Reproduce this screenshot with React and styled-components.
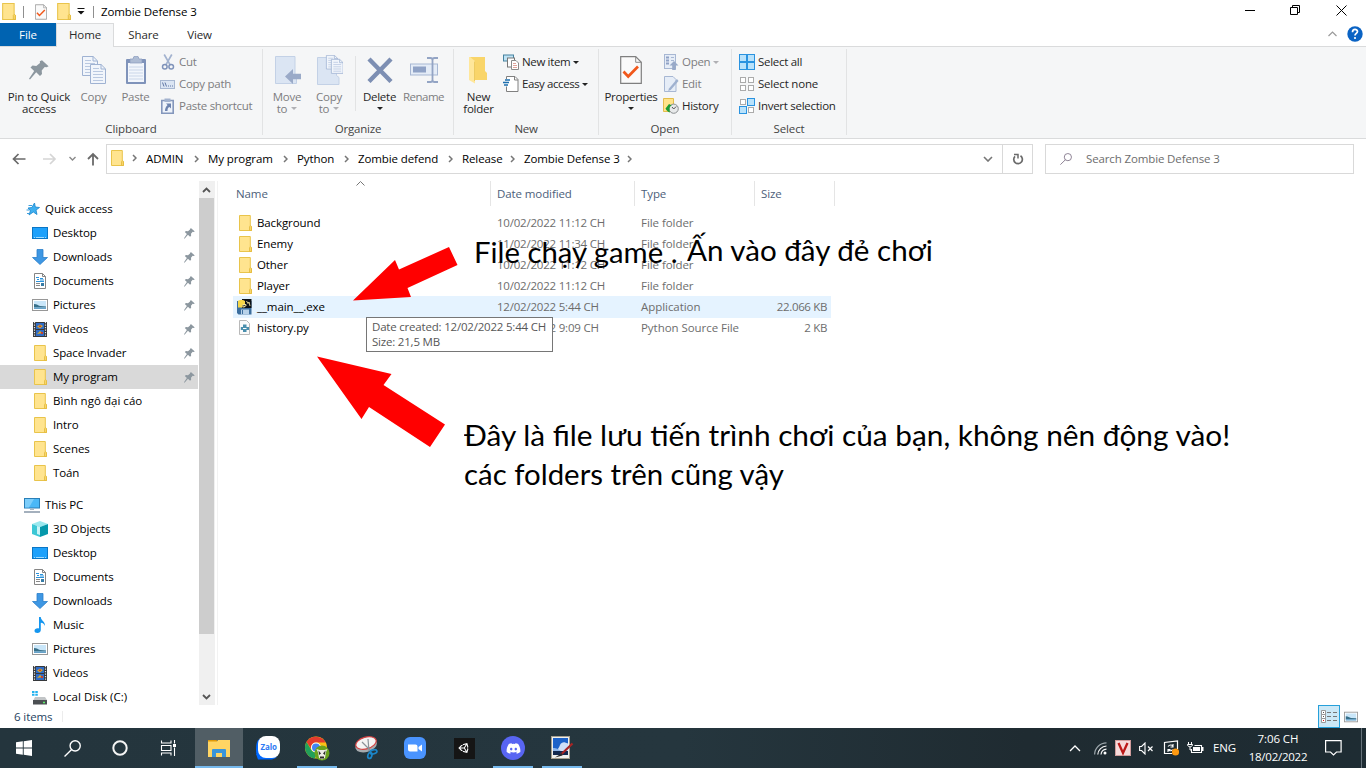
import React from 'react';
import styled, { createGlobalStyle } from 'styled-components';
import { FaUnity, FaDiscord } from 'react-icons/fa';

const Global = createGlobalStyle`
  * { box-sizing: border-box; }
  body { margin: 0; background: #fff; overflow: hidden; }
  svg { display: block; flex: none; }
`;

const Window = styled.div`
  position: relative;
  display: flex;
  flex-direction: column;
  width: 1366px;
  height: 768px;
  background: #fff;
  color: #000;
  font: 11.5px/15px "Open Sans", "Noto Sans", sans-serif;
  letter-spacing: -0.1px;
  white-space: nowrap;
  overflow: hidden;
`;

const Text = styled.span`
  letter-spacing: ${p => p.$ls ?? -0.1}px;
`;
const Label = styled(Text)`
  padding-bottom: 2px;
`;

/* ---------- title bar ---------- */
const TitleBar = styled.header`
  display: flex;
  align-items: center;
  height: 23px;
  flex: none;
`;
const QuickTools = styled.div`
  display: flex;
  align-items: center;
  width: 101px;
  height: 23px;
`;
const QuickItem = styled.div`
  margin-left: ${p => p.$l}px;
`;
const ToolSep = styled.i`
  width: 1px;
  height: 12px;
  background: #8f8f8f;
  margin-left: ${p => p.$l}px;
`;
const Caption = styled.h1`
  margin: 0;
  font-size: 11.5px;
  font-weight: 400;
  flex: 1;
`;
const WindowButtons = styled.div`
  display: flex;
  align-items: center;
  align-self: flex-start;
  gap: 35px;
  padding-right: 19px;
  height: 21px;
`;

/* ---------- ribbon ---------- */
const Tabs = styled.nav`
  display: flex;
  height: 24px;
  flex: none;
  border-bottom: 1px solid #dadbdc;
`;
const Tab = styled.div`
  width: ${p => p.$w}px;
  height: ${p => (p.$kind === 'active' ? 24 : 23)}px;
  text-align: center;
  line-height: ${p => (p.$kind === 'active' ? 22 : 24)}px;
  color: ${p => (p.$kind === 'file' ? '#fff' : '#2b2b2b')};
  background: ${p => (p.$kind === 'file' ? '#0063b1' : p.$kind === 'active' ? '#f5f6f7' : 'transparent')};
  border: ${p => (p.$kind === 'active' ? '1px solid #dadbdc' : 'none')};
  border-bottom: none;
`;
const TabsEnd = styled.div`
  display: flex;
  align-items: center;
  gap: 10px;
  margin-left: auto;
  padding-right: 3px;
  height: 22px;
`;
const Ribbon = styled.section`
  display: flex;
  height: 92px;
  flex: none;
  padding-top: 2px;
  background: #f5f6f7;
  border-bottom: 1px solid #dadbdc;
`;
const Group = styled.div`
  display: flex;
  flex-direction: column;
  width: ${p => p.$w}px;
  height: 86px;
  border-right: 1px solid #e2e3e4;
`;
const GroupBody = styled.div`
  display: flex;
  flex: none;
  height: 70px;
  padding-left: ${p => p.$pl}px;
`;
const GroupName = styled.div`
  text-align: center;
  color: #444;
  line-height: 20px;
  height: 20px;
  flex: none;
`;
const BigButton = styled.div`
  display: flex;
  flex-direction: column;
  align-items: center;
  width: ${p => p.$w}px;
  padding-top: 5px;
  color: ${p => (p.$off ? '#7d7d80' : '#262626')};
  line-height: 13px;
  text-align: center;
`;
const BigIcon = styled.div`
  display: flex;
  justify-content: center;
  align-items: center;
  height: 32px;
  margin-bottom: 4px;
`;
const BigLine = styled.div`
  display: flex;
  align-items: center;
  justify-content: center;
  gap: 4px;
  height: 12px;
`;
const InnerSep = styled.i`
  width: 1px;
  height: 55px;
  margin: 7px 2px 0 5px;
  background: #e2e3e4;
`;
const SmallList = styled.div`
  display: flex;
  flex-direction: column;
  margin-left: ${p => p.$ml ?? 4}px;
  padding-top: 2px;
`;
const SmallButton = styled.div`
  display: flex;
  align-items: center;
  gap: 3px;
  height: 22px;
  color: ${p => (p.$off ? '#7d7d80' : '#262626')};
`;
const Caret = styled.i`
  border: 3px solid transparent;
  border-top-color: ${p => (p.$off ? '#b0b0b4' : '#222')};
  border-bottom: 0;
`;

/* ---------- address row ---------- */
const AddressRow = styled.div`
  display: flex;
  height: 42px;
  flex: none;
  padding: 5px 0 7px 12px;
`;
const NavArrows = styled.div`
  display: flex;
  align-items: center;
  width: 94px;
  height: 30px;
`;
const AddressBox = styled.div`
  display: flex;
  align-items: center;
  width: 927px;
  height: 30px;
  border: 1px solid #d9d9d9;
  padding-left: 2px;
`;
const CrumbStart = styled.div`
  display: flex;
  align-items: center;
  justify-content: space-between;
  width: 37px;
  padding: 0 9px 2px 0;
`;
const Crumb = styled.div`
  display: flex;
  align-items: center;
  justify-content: space-between;
  width: ${p => p.$w}px;
  padding-right: 9px;
`;
const AddressEnd = styled.div`
  display: flex;
  align-items: center;
  margin-left: auto;
`;
const Refresh = styled.div`
  display: flex;
  align-items: center;
  justify-content: center;
  width: 30px;
  height: 28px;
  margin-left: 9px;
  border-left: 1px solid #d9d9d9;
`;
const SearchBox = styled.div`
  display: flex;
  align-items: center;
  width: 309px;
  height: 30px;
  margin-left: 12px;
  padding-left: 14px;
  gap: 14px;
  border: 1px solid #d9d9d9;
  color: #6d6d6d;
`;

/* ---------- body ---------- */
const Body = styled.main`
  display: flex;
  height: 524px;
  flex: none;
`;
const Tree = styled.aside`
  width: 199px;
  padding-top: 16px;
  overflow: hidden;
`;
const TreeRow = styled.div`
  display: flex;
  align-items: center;
  width: 198px;
  height: 24px;
  margin-top: ${p => (p.$gap ? 8 : 0)}px;
  padding: 0 3px 0 ${p => (p.$root ? 24 : 32)}px;
  gap: 5px;
  background: ${p => (p.$sel ? '#d9d9d9' : 'transparent')};
`;
const TreeText = styled(Label)`
  flex: 1;
`;
const ScrollTrack = styled.div`
  display: flex;
  flex-direction: column;
  align-items: flex-start;
  justify-content: space-between;
  width: 16px;
  background: #f0f0f0;
`;
const ScrollCap = styled.div`
  display: flex;
  width: 15px;
  height: 17px;
  align-items: center;
  justify-content: center;
`;
const Thumb = styled.div`
  width: 15px;
  height: 436px;
  margin-bottom: auto;
  background: #cdcdcd;
`;
const Files = styled.section`
  width: 1149px;
  margin-left: 2px;
  padding-left: 15px;
  border-left: 1px solid #f2f2f2;
`;
const Columns = styled.div`
  display: grid;
  grid-template-columns: 258px 144px 120px 80px;
  height: 25px;
  color: #4c607a;
`;
const Column = styled.div`
  display: flex;
  align-items: center;
  justify-content: space-between;
  padding-left: ${p => p.$pl}px;
  border-right: 1px solid #e5e5e5;
`;
const SortMark = styled.div`
  align-self: flex-start;
  margin-right: 125px;
`;
const FileRow = styled.div`
  display: grid;
  grid-template-columns: 24px 240px 144px 114px 72px;
  align-items: center;
  width: 598px;
  height: 21px;
  background: ${p => (p.$hover ? '#e5f3ff' : 'transparent')};
  box-shadow: ${p => (p.$hover ? '0 1px 0 #e5f3ff' : 'none')};
  color: #6d6d6d;
`;
const FileList = styled.div`
  padding-top: 6px;
`;
const FileIcon = styled.div`
  padding-left: 4px;
`;
const FileName = styled(Text)`
  color: #000;
`;
const FileSize = styled(Text)`
  text-align: right;
`;

/* ---------- status bar ---------- */
const Status = styled.footer`
  display: flex;
  align-items: center;
  height: 23px;
  flex: none;
  padding-left: 14px;
  color: #26435f;
`;
const StatusSep = styled.i`
  width: 1px;
  height: 11px;
  margin-left: 10px;
  background: #ececec;
`;
const ViewModes = styled.div`
  display: flex;
  align-items: center;
  gap: 4px;
  margin-left: auto;
  padding-right: 8px;
`;
const ViewMode = styled.div`
  display: flex;
  align-items: center;
  justify-content: center;
  width: 22px;
  height: 23px;
  background: #cce8f6;
  border: 1px solid #26a0da;
`;

/* ---------- taskbar ---------- */
const Taskbar = styled.div`
  display: flex;
  align-items: stretch;
  height: 40px;
  flex: none;
  color: #fff;
  background: linear-gradient(90deg, #24353d 0, #25363e 50%, #1f2b31 75%, #1e2c33 100%);
`;
const TaskButton = styled.div`
  position: relative;
  display: flex;
  align-items: center;
  justify-content: center;
  width: 48px;
  margin-right: ${p => p.$mr ?? 0}px;
  background: ${p => (p.$active ? '#515e65' : 'transparent')};
  &::after {
    content: "";
    position: absolute;
    left: ${p => (p.$active ? 0 : 4)}px;
    right: ${p => (p.$active ? 0 : 4)}px;
    bottom: 0;
    height: 2px;
    background: ${p => (p.$open || p.$active ? '#76b9ed' : 'transparent')};
  }
`;
const Tray = styled.div`
  display: flex;
  align-items: center;
  margin-left: auto;
`;
const TraySlot = styled.div`
  display: flex;
  align-items: center;
  justify-content: center;
  width: ${p => p.$w}px;
`;
const Clock = styled.div`
  width: 70px;
  text-align: center;
  line-height: 18px;
  padding-bottom: 1px;
`;
const PeekEdge = styled.i`
  width: 5px;
  height: 40px;
  margin-left: 8px;
  border-left: 1px solid #66727a;
`;
const Tile = styled.div`
  display: flex;
  align-items: center;
  justify-content: center;
  width: ${p => p.$s}px;
  height: ${p => p.$s}px;
  border-radius: ${p => p.$r ?? 0};
  background: ${p => p.$bg};
  color: #fff;
`;

/* ---------- overlays ---------- */
const Tooltip = styled.div`
  position: absolute;
  left: 366px;
  top: 317px;
  width: 187px;
  height: 35px;
  padding: 1px 0 0 5px;
  border: 1px solid #767676;
  background: #fff;
  color: #575757;
  line-height: 15px;
`;
const Arrow = styled.svg`
  position: absolute;
  left: 310px;
  top: 240px;
`;
const Note = styled.div`
  position: absolute;
  left: ${p => p.$x}px;
  top: ${p => p.$y}px;
  font: 28px/39px Lato, "Open Sans", sans-serif;
  letter-spacing: 0;
  transform: scaleX(${p => p.$stretch});
  transform-origin: 0 0;
`;

/* ---------- icons ---------- */
const Svg = ({ w = 16, h = w, vw = w, vh = h, children, ...rest }) => (
  <svg width={w} height={h} viewBox={`0 0 ${vw} ${vh}`} fill="none" {...rest}>{children}</svg>
);

const Folder = ({ w = 16, h = w }) => (
  <Svg w={w} h={h} vw={16} vh={16}>
    <path d="M2.5.5h10.8v10.7l1.2.5v3.8h-12z" fill="#ffe48f" stroke="#e9c44b" />
    <path d="M12.5 15.5v-3.8l1-1 1 1v3.8z" fill="#f8d66a" stroke="#e3b93c" strokeWidth=".8" />
  </Svg>
);
const CheckPage = ({ w, h }) => (
  <Svg w={w} h={h} vw={22} vh={28}>
    <path d="M.7.7h15l5.6 5.6v21H.7z" fill="#fafafa" stroke="#7f7f7f" strokeWidth="1.2" />
    <path d="M15.7.7v5.6h5.6" stroke="#8b8b8b" />
    <path d="M3.5 15.5l4.7 5 9.8-10" stroke="#f1581b" strokeWidth="2.7" />
  </Svg>
);
const Pin = ({ w = 12, color = '#8c979f' }) => (
  <Svg w={w} vw={20} vh={20}>
    <path d="M13 .3l6.6 6-2 1-1.9-.3-3 3.4.3 3.5-2 2-3.8-3.6L1 19.5l-1-.7 5.2-7.8-3.7-3.6 2-1.9 3.8.6 3.7-3.2-.2-1.6z" fill={color} />
  </Svg>
);
const page = (x, y, k) => (
  <g key={k} transform={`translate(${x} ${y})`}>
    <path d="M.5.5h10.6l4.4 4.4v14.6H.5z" fill="#f1f5fb" stroke="#9fb2d2" />
    <path d="M11 .5v4.5h4.5" stroke="#9fb2d2" />
    <path d="M3 4.500h6M3 7.500h10M3 10.500h10M3 13.500h10M3 16.500h10" stroke="#b9c8e0" />
  </g>
);
const CopyIcon = () => <Svg w={24} h={28}>{[page(0, 0, 'a'), page(8, 8, 'b')]}</Svg>;
const PasteIcon = () => (
  <Svg w={20} h={28}>
    <rect x="0" y="3" width="20" height="25" rx="1" fill="#7f93ba" />
    <rect x="2" y="7" width="16" height="19" fill="#f2f6fc" />
    <path d="M4 3h3a3 3 0 0 1 6 0h3v4H4z" fill="#aebcd4" stroke="#8b9cbd" strokeWidth=".7" />
    <path d="M3 11h14M3 14h14M3 17h14M3 20h14M3 23h14" stroke="#cad6e9" />
  </Svg>
);
const CutIcon = () => (
  <Svg>
    <path d="M4.200.500L10 10.600M11.800.500L6 10.600" stroke="#a3b3cf" strokeWidth="1.700" />
    <circle cx="4.800" cy="12.700" r="2.300" stroke="#7f93ba" strokeWidth="1.500" />
    <circle cx="11.200" cy="12.700" r="2.300" stroke="#7f93ba" strokeWidth="1.500" />
  </Svg>
);
const PathIcon = () => (
  <Svg>
    <rect x=".5" y="4.500" width="14" height="8" fill="#dbe5f3" stroke="#a7b7d1" />
    <path d="M2.500 6.500l1.500 4M5 6.500l1.500 4" stroke="#6077a5" />
    <path d="M8 10h1M10 10h1M12 10h1" stroke="#6077a5" />
  </Svg>
);
const ShortcutIcon = () => (
  <Svg>
    <path d="M1.800 2.500h11.400v12.700H1.800z" fill="#eef3fa" stroke="#8497bc" strokeWidth="1.600" />
    <path d="M4.500.500h6v3.500h-6z" fill="#a2b2ce" />
    <path d="M6 5.500h5v5L9.500 9c-1.500.6-2 1.600-2 4H5c0-2.500.8-4.500 2.600-6z" fill="#6d83ae" />
  </Svg>
);
const MoveIcon = () => (
  <Svg w={28} h={28}>
    <path d="M2.500.500h19.500v18l1.500 2V27.500h-21z" fill="#dbe5f3" stroke="#c3d1e6" />
    <path transform="translate(12 13) scale(1 .94)" d="M0 8l8-8v5h8v6H8v5z" fill="#9aaac8" />
  </Svg>
);
const CopyToIcon = () => (
  <Svg w={28} h={30}>
    <path d="M2.500 2.500h19v18l2.500 2v7H2.500z" fill="#dbe5f3" stroke="#c3d1e6" />
    <g transform="translate(11 0) scale(.76 .72)">{page(0, 0, 'a')}</g>
    <g transform="translate(16 4) scale(.78 .74)">{page(0, 0, 'b')}</g>
  </Svg>
);
const DeleteIcon = () => (
  <Svg w={26} h={26}>
    <path d="M2 2l22 22.500M24 2L2 24.500" stroke="#7d8fb3" strokeWidth="4.400" />
  </Svg>
);
const RenameIcon = () => (
  <Svg w={28} h={28}>
    <rect x=".5" y="8" width="27" height="11" fill="#e4ecf7" stroke="#a7b7d3" />
    <rect x="3" y="10.500" width="13" height="6" fill="#8fa2c6" />
    <path d="M17 2h3.500q2 0 2 2v20q0 2-2 2H17M28 2h-3.500q-2 0-2 2v20q0 2 2 2H28" stroke="#93a4c4" strokeWidth="1.800" />
  </Svg>
);
const NewFolderIcon = () => (
  <Svg w={20} h={28}>
    <path d="M1 1h15v14l2 2v7H5z" fill="#f9d56a" />
    <path d="M0 1h1l5 4v22.500L0 24z" fill="#ffe79b" />
    <path d="M5.500 5.500V25" stroke="#edcb62" />
  </Svg>
);
const NewItemIcon = () => (
  <Svg>
    <rect x=".5" y="1" width="10" height="6" fill="#bfe3f5" stroke="#46829f" />
    <rect x="4.500" y="4" width="7" height="9" fill="#fff" stroke="#777" />
    <path d="M8.500 6.500h4.500l2.500 2.500v6.500h-7z" fill="#fff" stroke="#8a8a8a" />
    <path d="M10 9.500h3M10 11.500h4M10 13.500h4" stroke="#e0a39b" />
  </Svg>
);
const EasyIcon = () => (
  <Svg>
    <path d="M3.500 3V.500h8.500l3 3v12h-11.500v-5" fill="#fff" stroke="#808080" />
    <path d="M11.500.500v3.500h3.500" stroke="#808080" />
    <path d="M2 4h5M0 6.500h6M1 9h4" stroke="#1d6fae" strokeWidth="1.300" />
  </Svg>
);
const OpenIcon = () => (
  <Svg>
    <rect x="1.500" y=".5" width="11" height="14" fill="#e6edf7" stroke="#a7b7d3" />
    <path d="M3 3.500h3M3 6.500h3M3 9.500h3" stroke="#8fa2c6" strokeWidth="1.800" />
    <path d="M8 3.500h3M8 6.500h3" stroke="#a7b7d3" />
    <path d="M11 7l4.500 4.500h-2.700V16H9.200v-4.500H6.500z" fill="#98a9c8" />
  </Svg>
);
const EditIcon = () => (
  <Svg>
    <path d="M1.500.500h8.500l3 3v12H1.500z" fill="#e6edf7" stroke="#a7b7d3" />
    <path d="M14 3L6 12.500l-.8 2.500 2.500-1L15.500 5z" fill="#9fb1cf" />
  </Svg>
);
const HistoryIcon = () => (
  <Svg>
    <path d="M.5.500h10v13h-10z" fill="#ffe38a" stroke="#e3bd4b" />
    <circle cx="10.700" cy="10.700" r="4.600" fill="#e7e9ea" stroke="#8b8f91" />
    <path d="M10.700 11l2.500-2.500M10.700 11L9 9" stroke="#555" />
    <path d="M2.500 10.500l3.500-4.500 3 1.500C6.500 8 6 10 7 14.500c-2-.5-3.500-2-4.500-4z" fill="#1b9c33" />
  </Svg>
);
const box = (x, y, on) => (
  <rect key={`${x}-${y}`} x={x + 0.5} y={y + 0.5} width={on ? 7 : 5} height={on ? 7 : 5}
    fill={on ? '#b9e2fb' : '#fff'} stroke={on ? '#2a93e0' : '#ababab'} />
);
const SelectAllIcon = () => <Svg>{[box(0, 0, 1), box(8, 0, 1), box(0, 8, 1), box(8, 8, 1)]}</Svg>;
const SelectNoneIcon = () => <Svg>{[box(1, 1), box(9, 1), box(1, 9), box(9, 9)]}</Svg>;
const InvertIcon = () => <Svg>{[box(1, 1), box(8, 0, 1), box(0, 8, 1), box(9, 9)]}</Svg>;

const Chevron = ({ w = 5, h = 8, d = 'M1 1l3 3-3 3', color = '#767676', s = 1.500 }) => (
  <Svg w={w} h={h}><path d={d} stroke={color} strokeWidth={s} /></Svg>
);
const StarIcon = () => (
  <Svg>
    <path d="M10.500 2l.8 4 4.200.5-3.500 2.600 1 4.400-3.700-2.500L5 14l1.400-4.300L4 7l3.800-.5z" fill="#3fb0f0" stroke="#1684cd" strokeWidth=".8" />
    <path d="M4.500 4.500H8M2.500 9h3M3 12.500h2.500" stroke="#3d9fdd" />
  </Svg>
);
const DesktopIcon = () => (
  <Svg>
    <rect x=".5" y="2.500" width="15" height="11" fill="#1ea1fb" stroke="#0b76c5" />
    <path d="M2 12.500h12" stroke="#9fdcff" strokeDasharray="1 1 8 1" />
  </Svg>
);
const DownIcon = () => (
  <Svg><path d="M5 .500h6v8h4.500L8 15.500.500 8.500H5z" fill="#3e97e3" stroke="#2b7fca" strokeWidth=".8" /></Svg>
);
const DocIcon = () => (
  <Svg>
    <path d="M2.500.500h8l3 3v12h-11z" fill="#fff" stroke="#858585" />
    <path d="M10.500.500v3h3" stroke="#858585" />
    <path d="M4 4.500h3M5 6.500h2M8 5.500h3M8 7h4M4 8.500h8" stroke="#2a93dc" />
    <path d="M4 10.500h4M4 12.500h4" stroke="#888" />
    <path d="M9 10h3v3H9z" fill="#367ba5" />
  </Svg>
);
const PictureIcon = ({ w = 16 }) => (
  <Svg w={w} vw={16} vh={16}>
    <rect x=".5" y="2.500" width="15" height="11" fill="#fff" stroke="#979797" />
    <rect x="2" y="4" width="12" height="8" fill="#c9e6f9" />
    <path d="M2 7c3 0 4 1.500 6 2l6 .5v1H2z" fill="#38708a" />
    <path d="M2 10.500h12V12H2z" fill="#67a2c9" />
  </Svg>
);
const VideoIcon = () => (
  <Svg>
    <rect x="1" y="1" width="14" height="15" fill="#36383b" />
    <path d="M2.500 1v15M13.500 1v15" stroke="#e8e8e8" strokeWidth="1.200" strokeDasharray="1.300 1.200" />
    <path d="M4 2h8v6H4zM4 9h8v6H4z" fill="#2f6cc8" />
    <path d="M5 5.500l3-2 3 1.500-3 2.500zM5 13l3-3 3 2z" fill="#d7a829" />
    <path d="M7 4.500h2v1.500H7zM9 11h2v2H9z" fill="#c9402b" />
  </Svg>
);
const PcIcon = () => (
  <Svg>
    <rect x=".5" y="1.500" width="15" height="9.500" fill="#4bb8f7" stroke="#2a7fb7" />
    <path d="M1 2h9L5 10.500H1z" fill="#7dcefb" />
    <path d="M6 11.500h4v1.500H6z" fill="#a9b8c6" />
    <path d="M0 15h16" stroke="#7d8fa1" strokeWidth="1.400" />
  </Svg>
);
const CubeIcon = () => (
  <Svg>
    <path d="M0 3L8 0l8 3-8 3z" fill="#9be8ee" />
    <path d="M0 3l8 3v10l-8-3z" fill="#3cc7d5" />
    <path d="M16 3L8 6v10l8-3z" fill="#0598ab" />
    <path d="M5 5l3 1v8l-3-1z" fill="#c9f4f7" />
  </Svg>
);
const MusicIcon = () => (
  <Svg>
    <path d="M7 0h1.800c0 3.500 4.700 4.500 4.200 9-.7-2-2-3-4.200-3.300v7.300c0 2-1.600 3-3.300 3C3.500 16 2.500 15 2.500 13.700 2.500 12 4.500 11 7 11.500z" fill="#1596ef" />
  </Svg>
);
const DiskIcon = () => (
  <Svg>
    <path d="M0 2h2.500v2H0zM3.300 2h2.500v2H3.300zM0 4.800h2.500v2H0zM3.300 4.800h2.500v2H3.300z" fill="#22b2ef" />
    <path d="M3 8h10l2 3H1.500z" fill="#c2c5c7" />
    <rect x="1" y="11" width="14" height="4.500" fill="#4b4f52" />
    <path d="M11 13.500h2" stroke="#5df06c" strokeWidth="1.300" />
  </Svg>
);
const ExeIcon = () => (
  <Svg>
    <path d="M0 2h14.500v13.500H1.500L0 14z" fill="#3c6e9e" />
    <path d="M5 0h9.500v9H5z" fill="#0c1117" />
    <path d="M1 2c0-1.500 6.500-1.500 7 0v4H5.500v2.500H1z" fill="#f6d648" />
    <path d="M6 5.500h3v1.500H7.500V8H6zM9.500 2l1.500 2.500L12 3l1 4" stroke="#f4e7a1" strokeWidth=".9" />
    <rect x="4" y="10.500" width="8" height="5" fill="#b8d2e9" />
    <path d="M5.500 11v4" stroke="#3c6e9e" />
  </Svg>
);
const PyIcon = () => (
  <Svg>
    <path d="M2.500.500h7l3 3v11h-10z" fill="#fbfbfb" stroke="#b9b9b9" />
    <path d="M6 4.500h3.500V7H12v3H9.500v2H6v-2H3.800V7H6z" fill="#4b8fad" />
    <path d="M6 8.500h3.500" stroke="#fff" />
  </Svg>
);

/* ---------- taskbar icons ---------- */
const WinLogo = () => (
  <Svg w={16}><path d="M0 2.300L6.800 1.300v6.300H0zM7.700 1.200L16 0v7.600H7.700zM0 8.500h6.800v6.300L0 13.800zM7.700 8.500H16V16l-8.300-1.200z" fill="#fff" /></Svg>
);
const SearchGlyph = ({ w = 16, color = '#fff', s = 1.300 }) => (
  <Svg w={w} vw={16} vh={16}>
    <circle cx="10.500" cy="5.500" r="4.800" stroke={color} strokeWidth={s} />
    <path d="M7.200 9L.500 15.500" stroke={color} strokeWidth={s} />
  </Svg>
);
const Cortana = () => <Svg w={16}><circle cx="8" cy="8" r="6.700" stroke="#f4f4f4" strokeWidth="2" /></Svg>;
const TaskView = () => (
  <Svg w={17} h={16}>
    <path d="M1.500.500v2.500H11V.500M1.500 15.500V13H11v2.500M1.500 5.500H11v5H1.500zM14.500 0v3.500M14.500 7.500V16" stroke="#fff" strokeWidth="1.100" />
    <path d="M13 4h3v3h-3z" fill="#fff" />
  </Svg>
);
const ExplorerLogo = () => (
  <Svg w={22} h={19}>
    <path d="M0 1h8.500l1.500 2H0z" fill="#e09a09" />
    <path d="M0 2.500h9L10 1h12v17H0z" fill="#ffd564" />
    <path d="M4 11q0-1 1-1h12q1 0 1 1v7h-4v-4H8v4H4z" fill="#3a95da" />
  </Svg>
);
const ZaloText = styled.text`
  font: 700 8px "Open Sans", sans-serif;
  letter-spacing: -0.1px;
`;
const ZaloLogo = () => (
  <Svg w={24}>
    <path d="M2 4l6-3v22c-4-.5-8-2-8-8 0-4 0-8 2-11z" fill="#0068ff" />
    <path d="M0 18l2 5.500h14l5-2z" fill="#0068ff" />
    <rect x="2" y="0" width="22" height="22" rx="8" fill="#fff" />
    <ZaloText x="4.500" y="14" fill="#2f7bf3">Zalo</ZaloText>
  </Svg>
);
const ChromeLogo = () => (
  <Svg w={25} h={25}>
    <circle cx="11" cy="11.500" r="11" fill="#fbc116" />
    <path d="M1.500 6A11 11 0 0 1 20.600 6.500H11a5 5 0 0 0-4.500 7z" fill="#e33b2e" />
    <path d="M1.500 6l5.200 8.500a5 5 0 0 0 5.500 1.800L10 22.500A11 11 0 0 1 1.500 6z" fill="#22a05a" />
    <circle cx="11" cy="11.500" r="5" fill="#fff" />
    <circle cx="11" cy="11.500" r="4" fill="#4285f4" />
    <circle cx="17" cy="17" r="7.500" fill="#6aa21f" />
    <path d="M11.500 13l3 1h5l3-1-1.500 3-1 6-3 1.500-3-1.500-1-5.500z" fill="#ecebe5" />
    <path d="M13.500 14.500l2.500 3-2 1.500zM20.500 14.500l-2.500 3 2 1.500zM15 20.500h4v2h-4z" fill="#2c2b29" />
  </Svg>
);
const SnipLogo = () => (
  <Svg w={24} h={24}>
    <ellipse cx="12" cy="9.500" rx="11" ry="6.500" transform="rotate(-16 12 9)" fill="#a6abae" />
    <ellipse cx="12" cy="7" rx="10.500" ry="5.800" transform="rotate(-16 12 7)" fill="#f4f4f4" stroke="#d44343" strokeWidth="1.200" />
    <path d="M8 6l8 8M14 3l1 12" stroke="#8a9298" strokeWidth="1.200" />
    <ellipse cx="19.500" cy="16" rx="3.500" ry="2" transform="rotate(-15 19 16)" stroke="#1b86c9" strokeWidth="1.700" />
    <ellipse cx="16" cy="19.500" rx="2" ry="3" transform="rotate(15 16 19)" stroke="#1b86c9" strokeWidth="1.700" />
  </Svg>
);
const ZoomLogo = () => (
  <Svg w={22}>
    <rect width="22" height="22" rx="6" fill="#4a94ff" />
    <path d="M4 7.500h7.500q2 0 2 2v5H6q-2 0-2-2zM14.500 10l3.500-2.500v7L14.500 12z" fill="#fff" />
  </Svg>
);
const PaintLogo = () => (
  <Svg w={24} h={24}>
    <rect x="1.500" y=".5" width="18" height="22" fill="#f1f1ee" stroke="#a59f8e" />
    <rect x="3" y="2" width="15" height="13" fill="#1d62c8" />
    <path d="M7 15c1-3 2-3 3-6 1-2 3-3 5-2.500 1 0 2 1 3 1V15z" fill="#cfe0f7" />
    <path d="M3 12c4 0 5 1 8 3H3z" fill="#8db6ea" />
    <path d="M3 15h15v4H3z" fill="#12294f" />
    <path d="M22.500 7.500L11 18.500" stroke="#a82424" strokeWidth="2.200" />
    <path d="M12 17l-7 4.500 7.500-2z" fill="#2a2a2a" />
  </Svg>
);
const WifiIcon = () => (
  <Svg w={13} h={13}>
    <path d="M.6 12.500A12 12 0 0 1 12.500.800" stroke="#9ba5aa" strokeWidth="1.200" />
    <path d="M3.800 12.500A9 9 0 0 1 12.500 4M7 12.500A6 6 0 0 1 12.500 7.200" stroke="#f3f3f3" strokeWidth="1.200" />
    <circle cx="11" cy="11" r="1.500" fill="#fff" />
  </Svg>
);
const VIcon = () => (
  <Svg w={16}>
    <rect x=".5" y=".5" width="15" height="15" fill="#f6dada" stroke="#cf9b9b" />
    <path d="M3.500 3l4.500 10 4.500-10" stroke="#bb1818" strokeWidth="2.300" />
  </Svg>
);
const MuteIcon = () => (
  <Svg w={15} h={13}>
    <path d="M.600 4.500h2L6 1v11L2.600 8.500h-2z" stroke="#fff" strokeWidth="1.100" />
    <path d="M9 4.500l4.500 4.500M13.500 4.500L9 9" stroke="#fff" strokeWidth="1.200" />
  </Svg>
);
const UpdateIcon = () => (
  <Svg w={17} h={16}>
    <path d="M9 13.500H1.500v-11l13-1.500v8" stroke="#fff" strokeWidth="1.200" />
    <path d="M5 6.500c2-2.500 5-1.500 5 .5M10 4v3H7.500M5 12V9.500h2.500M5.500 10c1.500 1 3 1 4-.5" stroke="#fff" strokeWidth="1.100" />
    <circle cx="12.500" cy="12" r="3.600" fill="#ff9a11" />
  </Svg>
);
const BatteryIcon = () => (
  <Svg w={17} h={12}>
    <path d="M4.500 7v3.500h10v-7H7.500" stroke="#fff" strokeWidth="1.100" />
    <path d="M6 5h7v4H6zM15 5h1.500v4H15z" fill="#fff" />
    <path d="M1.500 0v2M4.500 0v2M.500 2.500h5c0 3-5 3-5 0zM3 5v3h2" stroke="#fff" />
  </Svg>
);
const NoticeIcon = () => (
  <Svg w={17} h={16}><path d="M.600.600h15.500v11.400h-4.600l-3 3-3-3H.600z" stroke="#fff" strokeWidth="1.200" /></Svg>
);

/* ---------- data ---------- */
const crumbs = [['ADMIN', 62], ['My program', 89], ['Python', 61], ['Zombie defend', 104], ['Release', 62], ['Zombie Defense 3', 117]];
const quick = [
  ['Desktop', DesktopIcon, 1], ['Downloads', DownIcon, 1], ['Documents', DocIcon, 1], ['Pictures', PictureIcon, 1],
  ['Videos', VideoIcon, 1], ['Space Invader', Folder, 1], ['My program', Folder, 1], ['Bình ngô đại cáo', Folder],
  ['Intro', Folder], ['Scenes', Folder], ['Toán', Folder],
];
const pc = [
  ['3D Objects', CubeIcon], ['Desktop', DesktopIcon], ['Documents', DocIcon], ['Downloads', DownIcon], ['Music', MusicIcon],
  ['Pictures', PictureIcon], ['Videos', VideoIcon], ['Local Disk (C:)', DiskIcon],
];
const looser = { 'Bình ngô đại cáo': 0.03, 'Local Disk (C:)': 0.05, 'Space Invader': -0.15 };
const files = [
  ['Background', '10/02/2022 11:12 CH', 'File folder', '', Folder],
  ['Enemy', '11/02/2022 11:34 CH', 'File folder', '', Folder],
  ['Other', '10/02/2022 11:12 CH', 'File folder', '', Folder],
  ['Player', '10/02/2022 11:12 CH', 'File folder', '', Folder],
  ['__main__.exe', '12/02/2022 5:44 CH', 'Application', '22.066 KB', ExeIcon],
  ['history.py', '18/02/2022 9:09 CH', 'Python Source File', '2 KB', PyIcon],
];

const Big = ({ w, icon, lines, off, caret, ls = -0.25 }) => (
  <BigButton $w={w} $off={off}>
    <BigIcon>{icon}</BigIcon>
    {lines.map((l, i) => (
      <BigLine key={l}><Text $ls={ls}>{l}</Text>{caret === 'inline' && i === lines.length - 1 && <Caret $off={off} />}</BigLine>
    ))}
    {caret === 'below' && <BigLine><Caret /></BigLine>}
  </BigButton>
);
const Small = ({ icon, label, off, caret, ls = -0.28 }) => (
  <SmallButton $off={off}>{icon}<Label $ls={ls}>{label}</Label>{caret && <Caret $off={off} />}</SmallButton>
);

export default function App() {
  return (
    <Window>
      <Global />
      <TitleBar>
        <QuickTools>
          <Folder w={17} />
          <ToolSep $l={6} />
          <QuickItem $l={11}><CheckPage w={12} h={16} /></QuickItem>
          <QuickItem $l={8}><Folder w={17} /></QuickItem>
          <QuickItem $l={5}>
            <Svg w={8} h={7}><path d="M.500.500h7" stroke="#111" /><path d="M.500 3h7L4 6.500z" fill="#111" /></Svg>
          </QuickItem>
          <ToolSep $l={8} />
        </QuickTools>
        <Caption><Text>Zombie Defense 3</Text></Caption>
        <WindowButtons>
          <Svg w={11} h={11}><path d="M1 5.500h10" stroke="#000" /></Svg>
          <Svg w={11} h={11}><path d="M.500 2.500h7v7h-7zM2.500 2.500v-2h7v7h-2" stroke="#000" /></Svg>
          <Svg w={11} h={11}><path d="M.500.500l10 10M10.500.500l-10 10" stroke="#000" /></Svg>
        </WindowButtons>
      </TitleBar>
      <Tabs>
        <Tab $w={56} $kind="file">File</Tab>
        <Tab $w={58} $kind="active">Home</Tab>
        <Tab $w={59}>Share</Tab>
        <Tab $w={53}>View</Tab>
        <TabsEnd>
          <Chevron w={9} h={6} d="M.500 5l4-4 4 4" color="#9a9a9a" s={1.200} />
          <Svg w={16}>
            <circle cx="8" cy="8" r="7.700" fill="#0a63c4" />
            <path d="M5.500 6.200c0-3.700 5-3.400 5-.6 0 1.700-2.500 1.900-2.500 3.900" stroke="#fff" strokeWidth="1.700" />
            <circle cx="8" cy="12" r="1.100" fill="#fff" />
          </Svg>
        </TabsEnd>
      </Tabs>

      <Ribbon>
        <Group $w={263}>
          <GroupBody $pl={6}>
            <Big w={66} icon={<Pin w={20} />} lines={['Pin to Quick', 'access']} ls={-0.15} />
            <Big w={43} off icon={<CopyIcon />} lines={['Copy']} />
            <Big w={41} off icon={<PasteIcon />} lines={['Paste']} />
            <SmallList>
              <Small off icon={<CutIcon />} label="Cut" />
              <Small off icon={<PathIcon />} label="Copy path" />
              <Small off icon={<ShortcutIcon />} label="Paste shortcut" />
            </SmallList>
          </GroupBody>
          <GroupName>Clipboard</GroupName>
        </Group>
        <Group $w={191}>
          <GroupBody $pl={3}>
            <Big w={42} off icon={<MoveIcon />} lines={['Move', 'to']} caret="inline" />
            <Big w={42} off icon={<CopyToIcon />} lines={['Copy', 'to']} caret="inline" />
            <InnerSep />
            <Big w={43} icon={<DeleteIcon />} lines={['Delete']} caret="below" />
            <Big w={45} off icon={<RenameIcon />} lines={['Rename']} ls={-0.5} />
          </GroupBody>
          <GroupName><Text $ls={-0.2}>Organize</Text></GroupName>
        </Group>
        <Group $w={145}>
          <GroupBody $pl={3}>
            <Big w={43} icon={<NewFolderIcon />} lines={['New', 'folder']} />
            <SmallList $ml={3}>
              <Small icon={<NewItemIcon />} label="New item" caret ls={-0.35} />
              <Small icon={<EasyIcon />} label="Easy access" caret ls={-0.4} />
            </SmallList>
          </GroupBody>
          <GroupName><Text $ls={-0.4}>New</Text></GroupName>
        </Group>
        <Group $w={133}>
          <GroupBody $pl={3}>
            <Big w={58} icon={<CheckPage w={22} h={28} />} lines={['Properties']} caret="below" />
            <SmallList $ml={3}>
              <Small off icon={<OpenIcon />} label="Open" caret />
              <Small off icon={<EditIcon />} label="Edit" />
              <Small icon={<HistoryIcon />} label="History" />
            </SmallList>
          </GroupBody>
          <GroupName>Open</GroupName>
        </Group>
        <Group $w={115}>
          <GroupBody $pl={7}>
            <SmallList $ml={0}>
              <Small icon={<SelectAllIcon />} label="Select all" />
              <Small icon={<SelectNoneIcon />} label="Select none" ls={-0.2} />
              <Small icon={<InvertIcon />} label="Invert selection" />
            </SmallList>
          </GroupBody>
          <GroupName>Select</GroupName>
        </Group>
      </Ribbon>

      <AddressRow>
        <NavArrows>
          <Svg w={94} h={30}>
            <path d="M1.500 15h12M6.500 10l-5 5 5 5" stroke="#6a6a6a" strokeWidth="1.700" />
            <path d="M31 15h12M38 10l5 5-5 5" stroke="#d5d5d5" strokeWidth="1.700" />
            <path d="M57.500 13l3 3 3-3" stroke="#8a8a8a" strokeWidth="1.400" />
            <path d="M81 21.500V10M76 15l5-5 5 5" stroke="#6a6a6a" strokeWidth="1.800" />
          </Svg>
        </NavArrows>
        <AddressBox>
          <CrumbStart><Folder /><Chevron /></CrumbStart>
          {crumbs.map(([c, w]) => (
            <Crumb key={c} $w={w}><Label>{c}</Label><Chevron /></Crumb>
          ))}
          <AddressEnd>
            <Chevron w={10} h={6} d="M1 1l4 4 4-4" s={1.600} />
            <Refresh>
              <Svg w={12} h={12}>
                <path d="M8.500 2.800A4.300 4.300 0 1 1 3 3.300" stroke="#6a6a6a" strokeWidth="1.700" />
                <path d="M2 1.500h4v4" stroke="#6a6a6a" strokeWidth="1.500" />
              </Svg>
            </Refresh>
          </AddressEnd>
        </AddressBox>
        <SearchBox>
          <SearchGlyph w={12} color="#82768a" s={1.200} />
          <Label $ls={-0.13}>Search Zombie Defense 3</Label>
        </SearchBox>
      </AddressRow>

      <Body>
        <Tree>
          <TreeRow $root><StarIcon /><TreeText $ls={-0.05}>Quick access</TreeText></TreeRow>
          {quick.map(([n, I, pinned]) => (
            <TreeRow key={n} $sel={n === 'My program'}><I /><TreeText $ls={looser[n]}>{n}</TreeText>{pinned && <Pin w={11} />}</TreeRow>
          ))}
          <TreeRow $root $gap><PcIcon /><TreeText>This PC</TreeText></TreeRow>
          {pc.map(([n, I]) => <TreeRow key={n}><I /><TreeText $ls={looser[n]}>{n}</TreeText></TreeRow>)}
        </Tree>
        <ScrollTrack>
          <ScrollCap><Chevron w={9} h={6} d="M1 5l3.500-3.500L8 5" color="#555" s={1.800} /></ScrollCap>
          <Thumb />
          <ScrollCap><Chevron w={9} h={6} d="M1 1l3.500 3.500L8 1" color="#555" s={1.800} /></ScrollCap>
        </ScrollTrack>
        <Files>
          <Columns>
            <Column $pl={3}>
              <Text>Name</Text>
              <SortMark><Chevron w={9} h={5} d="M.500 4.500l4-4 4 4" s={1} /></SortMark>
            </Column>
            <Column $pl={6}><Text>Date modified</Text></Column>
            <Column $pl={6}><Text>Type</Text></Column>
            <Column $pl={6}><Text>Size</Text></Column>
          </Columns>
          <FileList>
            {files.map(([n, d, t, s, I]) => (
              <FileRow key={n} $hover={n === '__main__.exe'}>
                <FileIcon><I /></FileIcon>
                <FileName>{n}</FileName><Text $ls={-0.21}>{d}</Text><Text $ls={-0.05}>{t}</Text><FileSize $ls={-0.35}>{s}</FileSize>
              </FileRow>
            ))}
          </FileList>
        </Files>
      </Body>

      <Status>
        <Text>6 items</Text>
        <StatusSep />
        <ViewModes>
          <ViewMode>
            <Svg w={16} h={14}>
              <path d="M.500.500h4v4h-4zM.500 4.500h4v4h-4zM.500 8.500h4v4h-4z" fill="#fff" stroke="#999" />
              <path d="M2 2.500h1M2 6.500h1" stroke="#555" /><path d="M2 10.500h1" stroke="#d11" />
              <path d="M6 2.500h4M12 2.500h4M6 6.500h4M12 6.500h4M6 10.500h4M12 10.500h4" stroke="#777" />
            </Svg>
          </ViewMode>
          <PictureIcon w={14} />
        </ViewModes>
      </Status>

      <Taskbar>
        <TaskButton><WinLogo /></TaskButton>
        <TaskButton><SearchGlyph w={17} /></TaskButton>
        <TaskButton><Cortana /></TaskButton>
        <TaskButton $mr={3}><TaskView /></TaskButton>
        <TaskButton $active $mr={1}><ExplorerLogo /></TaskButton>
        <TaskButton $mr={1}><ZaloLogo /></TaskButton>
        <TaskButton $open $mr={1}><ChromeLogo /></TaskButton>
        <TaskButton $mr={1}><SnipLogo /></TaskButton>
        <TaskButton $mr={1}><ZoomLogo /></TaskButton>
        <TaskButton $mr={1}><Tile $s={21} $bg="#151515"><FaUnity size={12} /></Tile></TaskButton>
        <TaskButton $open $mr={1}><Tile $s={24} $r="50%" $bg="#5865f2"><FaDiscord size={15} /></Tile></TaskButton>
        <TaskButton $open><PaintLogo /></TaskButton>
        <Tray>
          <TraySlot $w={24}><Chevron w={12} h={8} d="M1 7l5-5 5 5" color="#fff" s={1.300} /></TraySlot>
          <TraySlot $w={26}><WifiIcon /></TraySlot>
          <TraySlot $w={20}><VIcon /></TraySlot>
          <TraySlot $w={26}><MuteIcon /></TraySlot>
          <TraySlot $w={25}><UpdateIcon /></TraySlot>
          <TraySlot $w={22}><BatteryIcon /></TraySlot>
          <TraySlot $w={37}><Label $ls={-0.2}>ENG</Label></TraySlot>
          <Clock><Text>7:06 CH</Text><br /><Text $ls={-0.25}>18/02/2022</Text></Clock>
          <TraySlot $w={40}><NoticeIcon /></TraySlot>
          <PeekEdge />
        </Tray>
      </Taskbar>

      <Tooltip><Text $ls={-0.2}>Date created: 12/02/2022 5:44 CH</Text><br /><Text $ls={-0.2}>Size: 21,5 MB</Text></Tooltip>
      <Arrow width="150" height="210" viewBox="310 240 150 210">
        <path d="M353 300.500L395 260l4 9.500L449 247l8.500 18-50 23 3.500 9z" fill="#f00" />
        <path d="M317 356.500L391.500 374l-8 11L445 424.500l-15 22.500-61-40-7.500 12z" fill="#f00" />
      </Arrow>
      <Note $x={474} $y={233} $stretch={1.046}>File chạy game .</Note>
      <Note $x={687} $y={231} $stretch={1.056}>Ấn vào đây đẻ chơi</Note>
      <Note $x={464} $y={416} $stretch={1.064}>Đây là file lưu tiến trình chơi của bạn, không nên động vào!</Note>
      <Note $x={464} $y={455} $stretch={1.05}>các folders trên cũng vậy</Note>
    </Window>
  );
}
